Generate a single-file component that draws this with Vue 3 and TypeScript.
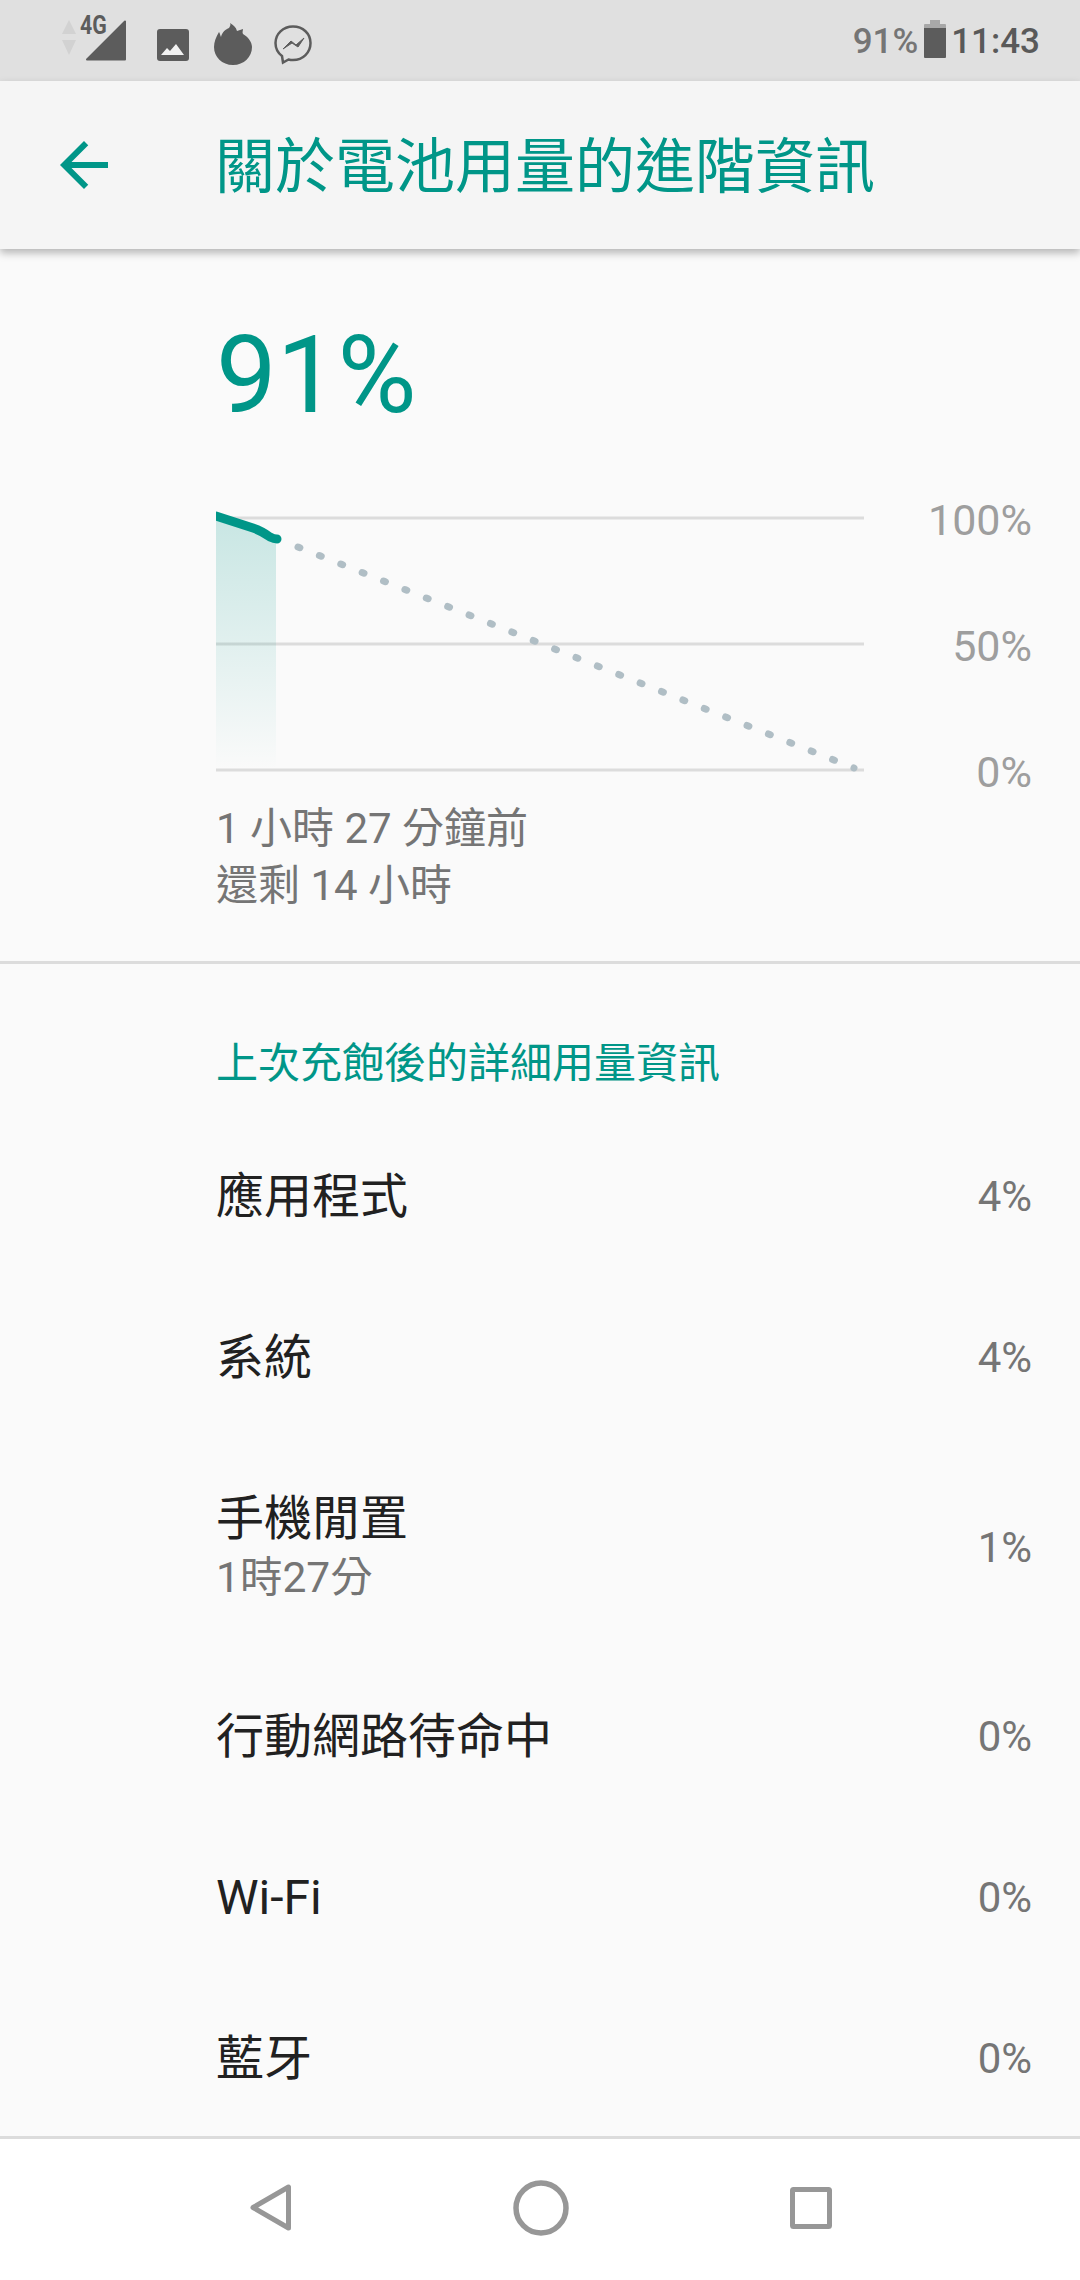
<script setup lang="ts">
interface Row { name: string; pct: string; sub?: string }
const rows: Row[] = [
  { name: '應用程式', pct: '4%' },
  { name: '系統', pct: '4%' },
  { name: '手機閒置', pct: '1%', sub: '1時27分' },
  { name: '行動網路待命中', pct: '0%' },
  { name: 'Wi-Fi', pct: '0%' },
  { name: '藍牙', pct: '0%' },
]
const axis = ['100%', '50%', '0%']
</script>

<template>
  <div class="page">
    <header class="status">
      <div class="status-left">
        <svg class="ic-net" width="66" height="60" viewBox="0 -8 66 60">
          <path d="M8 3l7 14H1zM1 23h14L8 38z" fill="#d2d2d2" />
          <text x="0" y="0" transform="translate(19 17) scale(.82 1)" class="net-text">4G</text>
          <path d="M64 4.500V42.500H26z" fill="#5c5c5c" stroke="#5c5c5c" stroke-width="2" stroke-linejoin="round" />
        </svg>
        <svg class="ic-img" width="32" height="32" viewBox="0 0 32 32">
          <rect width="32" height="32" rx="3" fill="#5c5c5c" />
          <path d="M4 26l6-7 3 3 6-7 8 11z" fill="#f2f2f2" />
        </svg>
        <svg class="ic-fire" width="38" height="42" viewBox="0 0 38 42">
          <path d="M19 42C8 42 0 34 0 24c0-5 2-10 5-15 1 1 1 3 2 5 1-5 5-8 8-9 1-2 2-3 1-5 3 2 6 4 7 8 2-1 4-1 6-2 0 2-1 3 0 5 5 3 9 8 9 13 0 10-8 18-19 18z" fill="#5c5c5c" />
        </svg>
        <svg class="ic-msg" width="38" height="40" viewBox="0 0 38 40">
          <path d="M19 1.500C9 1.500 1.500 9 1.500 18c0 5.500 2.500 10 6.500 13l1 6.500 5.500-3c1.500.4 3 .6 4.500.6 10 0 17.500-7.500 17.500-17S29 1.500 19 1.500z" fill="none" stroke="#5c5c5c" stroke-width="2.500" />
          <path d="M9 24l8-8 5 4 8-7-6 9-6-4z" fill="#5c5c5c" stroke="#5c5c5c" stroke-linejoin="round" />
        </svg>
      </div>
      <div class="status-right">
        <span class="batt-text">91%</span>
        <svg class="ic-batt" width="22" height="38" viewBox="0 0 22 38">
          <path d="M6 0h10v4H6z" fill="#a8a8a8" />
          <path d="M1 4h20a1 1 0 0 1 1 1v4H0V5a1 1 0 0 1 1-1z" fill="#a8a8a8" />
          <path d="M0 8h22v29a1 1 0 0 1-1 1H1a1 1 0 0 1-1-1z" fill="#5c5c5c" />
        </svg>
        <span class="clock">11:43</span>
      </div>
    </header>

    <div class="appbar">
      <svg class="ic-back" width="72" height="72" viewBox="0 0 24 24">
        <path d="M20 11H7.830l5.590-5.590L12 4l-8 8 8 8 1.410-1.410L7.830 13H20v-2z" fill="#009688" />
      </svg>
      <h1 class="title">關於電池用量的進階資訊</h1>
    </div>

    <main class="content">
      <section class="summary">
        <div class="level">91%</div>
        <div class="chart">
          <svg class="plot" width="648" height="280" viewBox="0 0 648 280">
            <defs>
              <linearGradient id="fade" x1="0" y1="0" x2="0" y2="1">
                <stop offset="0" stop-color="#009688" stop-opacity="0.2" />
                <stop offset="1" stop-color="#009688" stop-opacity="0" />
              </linearGradient>
            </defs>
            <path d="M0 18H648M0 144H648M0 270H648" stroke="#dcdcdc" stroke-width="3" fill="none" />
            <path d="M0 18L37 29Q46 32 54 39H60V270H0z" fill="url(#fade)" />
            <path d="M298 547L854 768" transform="translate(-216 -500)" stroke="#b0bec5" stroke-width="7" stroke-linecap="round" stroke-dasharray="2 21.010" fill="none" />
            <clipPath id="cut"><rect x="0" y="0" width="100" height="60" /></clipPath>
            <path d="M0 16L37 28Q46 31 54 37Q58 39 61 39" stroke="#009688" stroke-width="9" stroke-linecap="round" fill="none" clip-path="url(#cut)" />
          </svg>
          <div class="axis">
            <span v-for="a in axis" :key="a">{{ a }}</span>
          </div>
        </div>
        <p class="note first">1 小時 27 分鐘前</p>
        <p class="note">還剩 14 小時</p>
      </section>

      <section class="detail">
        <h2 class="section-title">上次充飽後的詳細用量資訊</h2>
        <div v-for="r in rows" :key="r.name" class="row" :class="{ tall: r.sub }">
          <div class="row-main">
            <div class="row-name">{{ r.name }}</div>
            <div v-if="r.sub" class="row-sub">{{ r.sub }}</div>
          </div>
          <div class="row-pct">{{ r.pct }}</div>
        </div>
      </section>
    </main>

    <nav class="navbar">
      <svg width="42" height="47" viewBox="0 0 42 47">
        <path d="M38.500 3v41L3 23.500z" fill="none" stroke="#979797" stroke-width="5" stroke-linejoin="round" />
      </svg>
      <svg width="56" height="56" viewBox="0 0 56 56">
        <circle cx="28" cy="28" r="25" fill="none" stroke="#979797" stroke-width="5.500" />
      </svg>
      <svg width="42" height="42" viewBox="0 0 42 42">
        <rect x="2.500" y="2.500" width="37" height="37" rx="1" fill="none" stroke="#979797" stroke-width="5" />
      </svg>
    </nav>
  </div>
</template>

<style>
body { margin: 0; background: #fafafa; }
</style>

<style scoped>
.page {
  width: 1080px;
  height: 2280px;
  display: flex;
  flex-direction: column;
  overflow: hidden;
  background: #fafafa;
  font-family: Roboto, "Noto Sans CJK TC", sans-serif;
}
.status {
  height: 81px;
  flex: none;
  background: #e0e0e0;
  display: flex;
  align-items: center;
  justify-content: space-between;
  padding: 0 40px 0 61px;
  box-sizing: border-box;
}
.status-left { display: flex; align-items: center; }
.ic-net { margin-top: -4px; margin-right: 30px; }
.ic-img { margin-right: 25px; margin-top: 9px; }
.ic-fire { margin-right: 22px; margin-top: 7px; }
.ic-msg { margin-top: 9px; }
.net-text {
  font-family: Roboto, sans-serif;
  font-weight: 700;
  font-size: 26px;
  fill: #5c5c5c;
}
.status-right {
  display: flex;
  align-items: center;
  font-size: 35px;
  font-weight: 500;
  line-height: 40px;
  padding-top: 2px;
}
.batt-text { color: #757575; }
.ic-batt { margin: -6px 5px 0 6px; }
.clock { color: #595959; }

.appbar {
  height: 168px;
  flex: none;
  background: #f5f5f5;
  display: flex;
  align-items: center;
  box-shadow: 0 4px 8px rgba(0, 0, 0, 0.28);
  position: relative;
  padding-left: 48px;
}
.ic-back { flex: none; margin-right: 95px; }
.title {
  margin: 0;
  font-size: 60px;
  font-weight: 400;
  color: #009688;
  line-height: 80px;
  padding-top: 5px;
}
.content {
  flex: 1;
  min-height: 0;
  overflow: hidden;
  display: flex;
  flex-direction: column;
}
.summary {
  height: 715px;
  box-sizing: border-box;
  border-bottom: 3px solid #dcdcdc;
  padding: 0 48px 0 216px;
  flex: none;
}
.level {
  margin-top: 61px;
  height: 130px;
  font-size: 108px;
  line-height: 130px;
  color: #009688;
}
.chart {
  display: flex;
  margin-top: 60px;
  height: 280px;
}
.plot { flex: none; }
.axis {
  flex: 1;
  display: flex;
  flex-direction: column;
  justify-content: space-between;
  align-items: flex-end;
  font-size: 43px;
  line-height: 50px;
  color: #9e9e9e;
  height: 302px;
  margin-top: -5px;
}
.note {
  margin: 0;
  font-size: 42px;
  line-height: 57px;
  color: #757575;
}
.note.first { margin-top: 20px; }
.detail { flex: 1; padding: 0 48px 0 216px; }
.section-title {
  margin: 0;
  height: 152px;
  box-sizing: border-box;
  padding-top: 72px;
  font-size: 42px;
  line-height: 56px;
  font-weight: 400;
  color: #009688;
}
.row {
  height: 161px;
  display: flex;
  align-items: center;
  justify-content: space-between;
}
.row.tall { height: 218px; }
.row-name {
  font-size: 48px;
  line-height: 62px;
  color: #212121;
}
.row-sub {
  font-size: 42.500px;
  line-height: 56px;
  color: #757575;
}
.row-pct {
  font-size: 42px;
  color: #757575;
}
.navbar {
  height: 144px;
  flex: none;
  background: #fff;
  border-top: 3px solid #dcdcdc;
  box-sizing: border-box;
  display: grid;
  grid-template-columns: 42px 56px 42px;
  justify-content: start;
  align-items: center;
  padding-left: 250px;
  padding-bottom: 4px;
  column-gap: 221px;
}
</style>
